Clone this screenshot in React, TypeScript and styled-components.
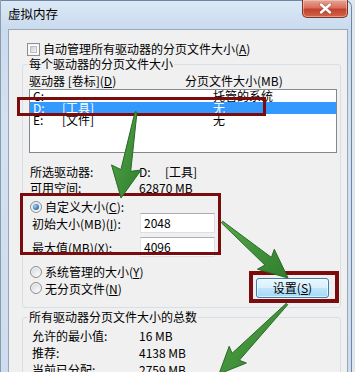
import styled, { createGlobalStyle } from "styled-components";

const GlobalStyle = createGlobalStyle`
  html, body {
    margin: 0;
    padding: 0;
  }
  body {
    width: 355px;
    height: 372px;
    overflow: hidden;
    background: #dfe7f0;
    font-family: "Noto Sans CJK SC", "Liberation Sans", sans-serif;
    font-size: 12px;
    color: #000;
  }
  * {
    box-sizing: border-box;
  }
`;

const Screen = styled.div`
  position: relative;
  width: 355px;
  height: 372px;
  overflow: hidden;
`;

const Window = styled.div`
  width: 352px;
  height: 400px;
  border: 1px solid #6f86a3;
  border-left-color: #8a9bb0;
  border-bottom: none;
  border-top-right-radius: 7px;
  background: linear-gradient(180deg, #dce8f5 0%, #c9dbee 28px, #d3e2f2 120px, #cddcee 100%);
`;

const TitleBar = styled.div`
  display: flex;
  align-items: flex-start;
  height: 28px;
  padding-left: 7px;
`;

const Title = styled.div`
  margin-top: 6px;
  font-size: 12.5px;
  line-height: 14px;
  color: #000;
`;

const CloseButton = styled.div`
  margin-left: auto;
  margin-right: 3px;
  margin-top: -1px;
  width: 46px;
  height: 18px;
  display: flex;
  align-items: center;
  justify-content: center;
  border: 1px solid #7a352c;
  border-top: none;
  border-radius: 0 0 5px 5px;
  background: linear-gradient(180deg, #e7a595 0%, #d9705c 45%, #c4412f 55%, #d26548 100%);
  box-shadow: inset 0 0 0 1px rgba(255, 220, 210, 0.45);
`;

const Client = styled.div`
  margin-left: 7px;
  width: 340px;
  height: 380px;
  border: 1px solid #9aa7b6;
  background: #f0f0f0;
  padding: 12px 6px 0 13px;
`;

const CheckRow = styled.label`
  display: flex;
  align-items: center;
  gap: 3px;
  height: 14px;
  margin-left: 5px;
  line-height: 14px;
`;

const CheckBox = styled.span`
  width: 13px;
  height: 13px;
  border: 1px solid #8e8f8f;
  background: #fff;
  box-shadow: inset 0 0 0 1px #f4f4f4;
  position: relative;

  &::after {
    content: "";
    position: absolute;
    inset: 2px;
    background: linear-gradient(135deg, #cbcfd5 0%, #f6f6f6 100%);
    border: 1px solid #b9bec6;
  }
`;

const Group = styled.fieldset<{ $pad?: number }>`
  margin: ${(p) => (p.$pad ? "2px" : "1px")} 0 0 0;
  padding: 0 0 ${(p) => p.$pad ?? 9}px 0;
  border: 1px solid #d5dfe5;
  border-radius: 3px;
  min-width: 0;
`;

const Legend = styled.legend`
  margin-left: 5px;
  padding: 0 1px;
  line-height: 14px;
  height: 14px;
`;

const HeaderRow = styled.div`
  display: grid;
  grid-template-columns: 156px 1fr;
  height: 14px;
  line-height: 14px;
  margin-top: 3px;
  padding-left: 6px;
`;

const ListBox = styled.div`
  margin: 1px 0 0 6px;
  width: 308px;
  height: 64px;
  border: 1px solid #828790;
  background: #fff;
`;

const ListRow = styled.div<{ $selected?: boolean }>`
  display: grid;
  grid-template-columns: 29px 151px 1fr;
  height: 12px;
  line-height: 12px;
  padding-left: 3px;
  white-space: nowrap;
  background: ${(p) => (p.$selected ? "#3399ff" : "transparent")};
  color: ${(p) => (p.$selected ? "#fff" : "#000")};
`;

const InfoRow = styled.div<{ $top: number; $indent?: number }>`
  display: grid;
  grid-template-columns: ${(p) => 109 - (p.$indent ?? 0)}px 26px 1fr;
  height: 14px;
  line-height: 14px;
  margin-top: ${(p) => p.$top}px;
  padding-left: ${(p) => 7 + (p.$indent ?? 0)}px;
  white-space: nowrap;
`;

const RadioRow = styled.label<{ $top: number }>`
  display: flex;
  align-items: center;
  gap: 3px;
  height: 13px;
  line-height: 13px;
  margin-top: ${(p) => p.$top}px;
  padding-left: 7px;
  white-space: nowrap;
`;

const Radio = styled.span<{ $checked?: boolean }>`
  width: 12px;
  height: 12px;
  border-radius: 50%;
  border: 1px solid #8e8f8f;
  background: radial-gradient(circle at 65% 70%, #f8f8f8 0%, #dcdde0 70%, #c9cbcf 100%);
  box-shadow: inset 0 0 0 1px #f6f6f6;
  position: relative;

  &::after {
    content: "";
    display: ${(p) => (p.$checked ? "block" : "none")};
    position: absolute;
    left: 2px;
    top: 2px;
    width: 6px;
    height: 6px;
    border-radius: 50%;
    background: radial-gradient(circle at 35% 35%, #9fd2f6 0%, #2b6fb0 70%, #1c4f86 100%);
  }
`;

const FieldRow = styled.div<{ $top: number }>`
  display: flex;
  align-items: center;
  height: 20px;
  margin-top: ${(p) => p.$top}px;
  padding-left: 9px;
  white-space: nowrap;
`;

const FieldLabel = styled.span`
  width: 108px;
`;

const TextInput = styled.div`
  width: 75px;
  height: 20px;
  padding-left: 3px;
  line-height: 18px;
  background: #fff;
  border: 1px solid #dbdfe6;
  border-top-color: #abadb3;
  border-left-color: #e2e3ea;
`;

const BottomRow = styled.div`
  display: flex;
  align-items: center;
  justify-content: space-between;
  height: 20px;
  padding-right: 11px;
`;

const PushButton = styled.div`
  width: 73px;
  height: 20px;
  display: flex;
  align-items: center;
  justify-content: center;
  border: 1px solid #3c7fb1;
  border-radius: 3px;
  background: linear-gradient(180deg, #eaf6fd 0%, #d9f0fc 50%, #bee6fd 50%, #a7d9f5 100%);
  box-shadow: inset 0 0 0 1px rgba(255, 255, 255, 0.6);
  line-height: 14px;
`;

const TotalRow = styled.div<{ $top: number }>`
  display: grid;
  grid-template-columns: 107px 1fr;
  height: 14px;
  line-height: 14px;
  margin-top: ${(p) => p.$top}px;
  padding-left: 9px;
  white-space: nowrap;
`;

const Highlight = styled.div<{ $x: number; $y: number; $w: number; $h: number; $b?: number }>`
  position: absolute;
  left: ${(p) => p.$x}px;
  top: ${(p) => p.$y}px;
  width: ${(p) => p.$w}px;
  height: ${(p) => p.$h}px;
  border: ${(p) => p.$b ?? 3}px solid #7a0c0e;
  pointer-events: none;
`;

const Overlay = styled.svg`
  position: absolute;
  left: 0;
  top: 0;
  width: 355px;
  height: 372px;
  pointer-events: none;
`;

type Pt = [number, number];

function arrowPoints(tail: Pt, tip: Pt, headLen: number, headHalf: number, shaftHalf: number, tailHalf = 1) {
  const [tx, ty] = tail;
  const [hx, hy] = tip;
  const len = Math.hypot(hx - tx, hy - ty);
  const ux = (hx - tx) / len;
  const uy = (hy - ty) / len;
  const px = -uy;
  const py = ux;
  const bx = hx - ux * headLen;
  const by = hy - uy * headLen;
  const back = 3;
  const pts: Pt[] = [
    [tx + px * tailHalf, ty + py * tailHalf],
    [bx + px * shaftHalf, by + py * shaftHalf],
    [bx - ux * back + px * headHalf, by - uy * back + py * headHalf],
    [hx, hy],
    [bx - ux * back - px * headHalf, by - uy * back - py * headHalf],
    [bx - px * shaftHalf, by - py * shaftHalf],
    [tx - px * tailHalf, ty - py * tailHalf],
  ];
  return pts.map((p) => `${p[0].toFixed(1)},${p[1].toFixed(1)}`).join(" ");
}

const arrows = [
  arrowPoints([136, 112], [121, 198], 28, 15, 5),
  arrowPoints([222, 222], [288, 278], 26, 13, 5),
  arrowPoints([287, 304], [219, 374], 24, 12, 5),
];

const drives = [
  { letter: "C:", label: "", size: "托管的系统" },
  { letter: "D:", label: "[工具]", size: "无", selected: true },
  { letter: "E:", label: "[文件]", size: "无" },
];

export default function App() {
  return (
    <Screen>
      <GlobalStyle />
      <Window>
        <TitleBar>
          <Title>虚拟内存</Title>
          <CloseButton>
            <svg width="13" height="11" viewBox="0 0 13 11">
              <path d="M2 1.5 L11 9.5 M11 1.5 L2 9.5" stroke="#5a2a24" strokeWidth="3.6" strokeLinecap="round" opacity="0.45" />
              <path d="M2 1.5 L11 9.5 M11 1.5 L2 9.5" stroke="#fff" strokeWidth="2.4" strokeLinecap="round" />
            </svg>
          </CloseButton>
        </TitleBar>

        <Client>
          <CheckRow>
            <CheckBox />
            <span>自动管理所有驱动器的分页文件大小(<u>A</u>)</span>
          </CheckRow>

          <Group>
            <Legend>每个驱动器的分页文件大小</Legend>
            <HeaderRow>
              <span>驱动器 [卷标](<u>D</u>)</span>
              <span>分页文件大小(MB)</span>
            </HeaderRow>
            <ListBox>
              {drives.map((d) => (
                <ListRow key={d.letter} $selected={d.selected}>
                  <span>{d.letter}</span>
                  <span>{d.label}</span>
                  <span>{d.size}</span>
                </ListRow>
              ))}
            </ListBox>

            <InfoRow $top={12}>
              <span>所选驱动器:</span>
              <span>D:</span>
              <span>[工具]</span>
            </InfoRow>
            <InfoRow $top={2}>
              <span>可用空间:</span>
              <span style={{ gridColumn: "2 / 4" }}>62870 MB</span>
            </InfoRow>

            <RadioRow $top={5}>
              <Radio $checked />
              <span>自定义大小(<u>C</u>):</span>
            </RadioRow>
            <FieldRow $top={0}>
              <FieldLabel>初始大小(MB)(<u>I</u>):</FieldLabel>
              <TextInput>2048</TextInput>
            </FieldRow>
            <FieldRow $top={4}>
              <FieldLabel>最大值(MB)(<u>X</u>):</FieldLabel>
              <TextInput>4096</TextInput>
            </FieldRow>

            <RadioRow $top={8}>
              <Radio />
              <span>系统管理的大小(<u>Y</u>)</span>
            </RadioRow>
            <BottomRow>
              <RadioRow $top={0}>
                <Radio />
                <span>无分页文件(<u>N</u>)</span>
              </RadioRow>
              <PushButton>设置(<u>S</u>)</PushButton>
            </BottomRow>
          </Group>

          <Group $pad={40}>
            <Legend>所有驱动器分页文件大小的总数</Legend>
            <TotalRow $top={5}>
              <span>允许的最小值:</span>
              <span>16 MB</span>
            </TotalRow>
            <TotalRow $top={3}>
              <span>推荐:</span>
              <span>4138 MB</span>
            </TotalRow>
            <TotalRow $top={3}>
              <span>当前已分配:</span>
              <span>2759 MB</span>
            </TotalRow>
          </Group>
        </Client>
      </Window>

      <Highlight $x={17} $y={97} $w={249} $h={19} />
      <Highlight $x={20} $y={193} $w={201} $h={62} />
      <Highlight $x={249} $y={271} $w={90} $h={32} $b={4} />

      <Overlay viewBox="0 0 355 372">
        <defs>
          <linearGradient id="arrowFill" x1="0" y1="0" x2="1" y2="1">
            <stop offset="0" stopColor="#56a84a" />
            <stop offset="1" stopColor="#2f7d2c" />
          </linearGradient>
        </defs>
        {arrows.map((pts, i) => (
          <polygon key={i} points={pts} fill="url(#arrowFill)" stroke="#2a6826" strokeWidth="1" strokeLinejoin="round" />
        ))}
      </Overlay>
    </Screen>
  );
}
